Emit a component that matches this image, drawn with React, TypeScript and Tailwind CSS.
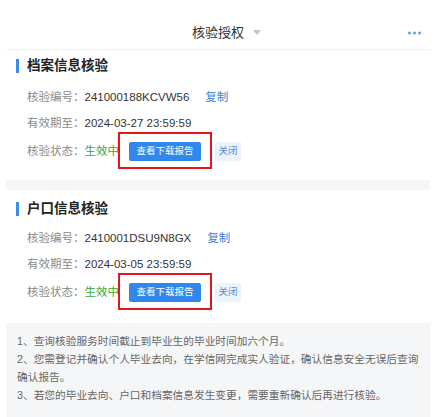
import React from 'react';

type Item = {
  title: string;
  code: string;
  expire: string;
  padTop: string;
  gap: string;
  padBottom: string;
};

const items: Item[] = [
  { title: '档案信息核验', code: '241000188KCVW56', expire: '2024-03-27 23:59:59', padTop: 'pt-[9px]', gap: 'mt-[12px]', padBottom: 'pb-[14px]' },
  { title: '户口信息核验', code: '2410001DSU9N8GX', expire: '2024-03-05 23:59:59', padTop: 'pt-[12px]', gap: 'mt-[10px]', padBottom: 'pb-[16px]' },
];

function Card({ item }: { item: Item }) {
  return (
    <div className={`bg-white ${item.padTop} ${item.padBottom}`}>
      <div className="flex items-center h-[14px] pl-[10px]">
        <div className="w-[3px] h-[14px] bg-[#3a8ee6]" />
        <span className="ml-[8px] text-[13.5px] leading-[14px] font-bold text-[#222]">{item.title}</span>
      </div>
      <div className={`${item.gap} pl-[21px] text-[11.5px]`}>
        <div className="flex items-center h-[26px]">
          <span className="text-[#8a8a8a]">核验编号：</span>
          <span className="text-[#333]">{item.code}</span>
          <span className="ml-[16px] text-[#3b82d6]">复制</span>
        </div>
        <div className="flex items-center h-[26px]">
          <span className="text-[#8a8a8a]">有效期至：</span>
          <span className="text-[#333]">{item.expire}</span>
        </div>
        <div className="flex items-center h-[29px]">
          <span className="text-[#8a8a8a]">核验状态：</span>
          <span className="text-[#3aa63a]">生效中</span>
          <div className="relative ml-[10px]">
            <div className="w-[72px] h-[19px] rounded-[2px] bg-[#2f88ea] text-white text-[9.5px] flex items-center justify-center">
              查看下载报告
            </div>
            {/* annotation box over the button */}
            <div className="absolute -left-[11px] -right-[11px] -top-[10px] -bottom-[8px] border-2 border-[#e5161b]" />
          </div>
          <div className="ml-[14px] w-[26px] h-[19px] bg-[#ebf4fd] text-[#5a8fd0] text-[9.5px] flex items-center justify-center">
            关闭
          </div>
        </div>
      </div>
    </div>
  );
}

export default function App() {
  return (
    <div
      className="w-[436px] h-[417px] overflow-hidden bg-white"
      style={{ fontFamily: '"Liberation Sans", "Noto Sans CJK SC", sans-serif' }}
    >
      <div className="px-[6px] pt-[16px]">
        {/* header */}
        <div className="relative flex items-center justify-center h-[34px] border-b border-[#f0f1f3]">
          <span className="text-[13px] text-[#333]">核验授权</span>
          <span className="ml-[9px] -mr-[17px] w-0 h-0 border-l-[4.5px] border-r-[4.5px] border-t-[5px] border-l-transparent border-r-transparent border-t-[#c4c4c4]" />
          <div className="absolute right-[9px] top-1/2 -translate-y-1/2 flex gap-[2px]">
            <span className="w-[3px] h-[3px] rounded-full bg-[#6b9ad8]" />
            <span className="w-[3px] h-[3px] rounded-full bg-[#6b9ad8]" />
            <span className="w-[3px] h-[3px] rounded-full bg-[#6b9ad8]" />
          </div>
        </div>

        <Card item={items[0]} />
        <div className="h-[10px] bg-[#f5f6f8]" />
        <Card item={items[1]} />

        {/* notes */}
        <div className="bg-[#f5f6f8] h-[200px] pt-[9px] px-[11px] text-[10.7px] leading-[18px] text-[#666] whitespace-nowrap">
          <div>1、查询核验服务时间截止到毕业生的毕业时间加六个月。</div>
          <div>2、您需登记并确认个人毕业去向，在学信网完成实人验证，确认信息安全无误后查询</div>
          <div>确认报告。</div>
          <div>3、若您的毕业去向、户口和档案信息发生变更，需要重新确认后再进行核验。</div>
        </div>
      </div>
    </div>
  );
}
